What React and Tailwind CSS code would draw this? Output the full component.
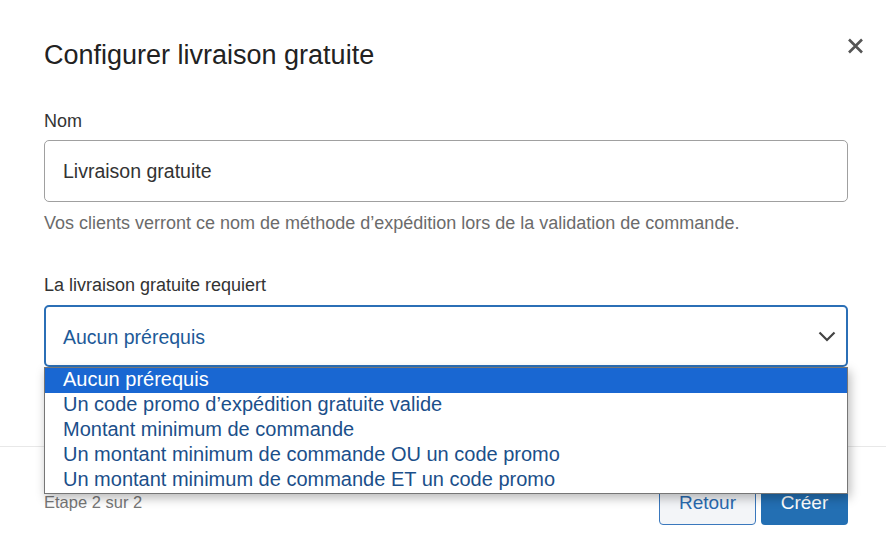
import React from "react";

const options = [
  "Aucun prérequis",
  "Un code promo d’expédition gratuite valide",
  "Montant minimum de commande",
  "Un montant minimum de commande OU un code promo",
  "Un montant minimum de commande ET un code promo",
];

export default function App() {
  return (
    <div
      className="relative w-[886px] h-[554px] overflow-hidden bg-white"
      style={{ fontFamily: '"Liberation Sans", Arial, sans-serif' }}
    >
      {/* Header */}
      <div className="flex items-start justify-between pl-[44px] pr-[22px] pt-[39px]">
        <h1 className="h-[32px] text-[27px] leading-[32px] text-[#222222] font-normal">
          Configurer livraison gratuite
        </h1>
        <svg
          className="mt-[-1px]"
          width="17"
          height="16"
          viewBox="0 0 17 16"
          fill="none"
          stroke="#555555"
          strokeWidth="2.6"
          strokeLinecap="butt"
        >
          <path d="M2 1.5 L15 14.5 M15 1.5 L2 14.5" />
        </svg>
      </div>

      {/* Body */}
      <div className="pl-[44px] pr-[38px]">
        <div className="mt-[38px] h-[24px] text-[18px] leading-[24px] text-[#333333]">Nom</div>
        <div className="mt-[7px] flex h-[62px] items-center rounded-[5px] border border-[#a0a0a0] px-[18px] pt-[2px] text-[19.5px] text-[#333333]">
          Livraison gratuite
        </div>
        <div className="mt-[9px] h-[24px] text-[18px] leading-[24px] text-[#6b6b6b]">
          Vos clients verront ce nom de méthode d’expédition lors de la validation de commande.
        </div>

        <div className="mt-[38px] h-[24px] text-[18px] leading-[24px] text-[#333333]">
          La livraison gratuite requiert
        </div>
        <div className="relative mt-[8px]">
          <div className="flex h-[62px] items-center justify-between rounded-[5px] border-2 border-[#2b6fb6] pl-[17px] pr-[10px] text-[19.5px] text-[#1d5a98]">
            <span className="pt-[3px]">Aucun prérequis</span>
            <svg width="18" height="11" viewBox="0 0 18 11" fill="none" stroke="#444444" strokeWidth="2.2">
              <path d="M1.5 1.5 L9 9 L16.5 1.5" />
            </svg>
          </div>
          {/* Native dropdown list */}
          <div className="absolute left-0 right-0 top-full z-10 border border-[#767676] bg-white shadow-[2px_4px_10px_rgba(0,0,0,0.28)]">
            {options.map((o, i) => (
              <div
                key={o}
                className={
                  i === 0
                    ? "h-[25px] pl-[18px] text-[20px] leading-[23px] bg-[#1967d2] text-white"
                    : "h-[25px] pl-[18px] text-[20px] leading-[23px] text-[#1b4f8a]"
                }
              >
                {o}
              </div>
            ))}
          </div>
        </div>
      </div>

      {/* Footer */}
      <div className="mt-[79px] border-t border-[#e8e8e8]">
        <div className="flex items-center justify-between pl-[44px] pr-[38px] pt-[34px]">
          <span className="mb-[3px] text-[16.5px] leading-[20px] text-[#777777]">Etape 2 sur 2</span>
          <div className="flex gap-[5px]">
            <button className="h-[44px] w-[97px] rounded-[4px] border border-[#3a78bd] bg-[#f3f5f8] text-[19px] text-[#2a6ab0]">
              Retour
            </button>
            <button className="h-[44px] w-[87px] rounded-[4px] bg-[#236fb3] text-[19px] text-white">
              Créer
            </button>
          </div>
        </div>
      </div>
    </div>
  );
}
